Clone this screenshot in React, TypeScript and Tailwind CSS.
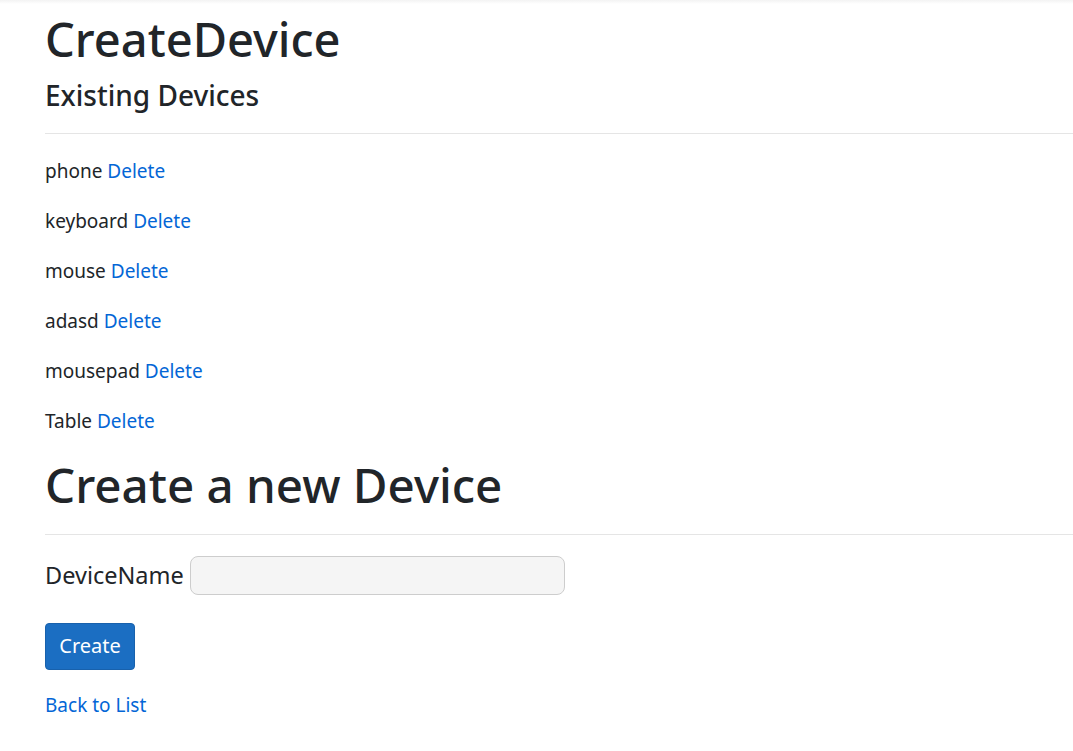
const devices = ["phone", "keyboard", "mouse", "adasd", "mousepad", "Table"];

const App = () => {
  return (
    <div className="min-h-[751px] bg-white text-[#212529] font-['Segoe_UI','Noto_Sans',sans-serif]">
      {/* navbar shadow remnant */}
      <div className="h-[4px] bg-gradient-to-b from-[#f3f3f3] to-white" />

      <main className="pl-[45px]">
        <h1 className="mt-[7px] text-[47px] leading-[1.2] font-medium">CreateDevice</h1>
        <h4 className="mt-[12px] text-[28px] leading-[1.2] font-medium">Existing Devices</h4>
        <hr className="mt-[20px] border-t border-[#e5e5e5]" />

        <div className="mt-[22px]">
          {devices.map((name) => (
            <p key={name} className="mb-[20px] text-[19px] leading-[30px]">
              {name}{" "}
              <a href="#" className="text-[#0366d6]">
                Delete
              </a>
            </p>
          ))}
        </div>

        <h1 className="mt-[1px] text-[47.5px] leading-[1.2] font-medium">Create a new Device</h1>
        <hr className="mt-[21px] border-t border-[#e5e5e5]" />

        <form className="mt-[21px]">
          <div className="flex items-center gap-[6px]">
            <label className="text-[23.5px] leading-[30px]">DeviceName</label>
            <input
              type="text"
              className="w-[375px] h-[39px] rounded-[8px] border border-[#cdcdcd] bg-[#f5f5f5] px-3 outline-none"
            />
          </div>
          <button
            type="button"
            className="mt-[28px] w-[90px] h-[47px] rounded-[4px] border border-[#1861ac] bg-[#1b6ec2] text-white text-[20px]"
          >
            Create
          </button>
        </form>

        <div className="mt-[20px] text-[19px] leading-[30px]">
          <a href="#" className="text-[#0366d6]">
            Back to List
          </a>
        </div>
      </main>
    </div>
  );
};

export default App;
